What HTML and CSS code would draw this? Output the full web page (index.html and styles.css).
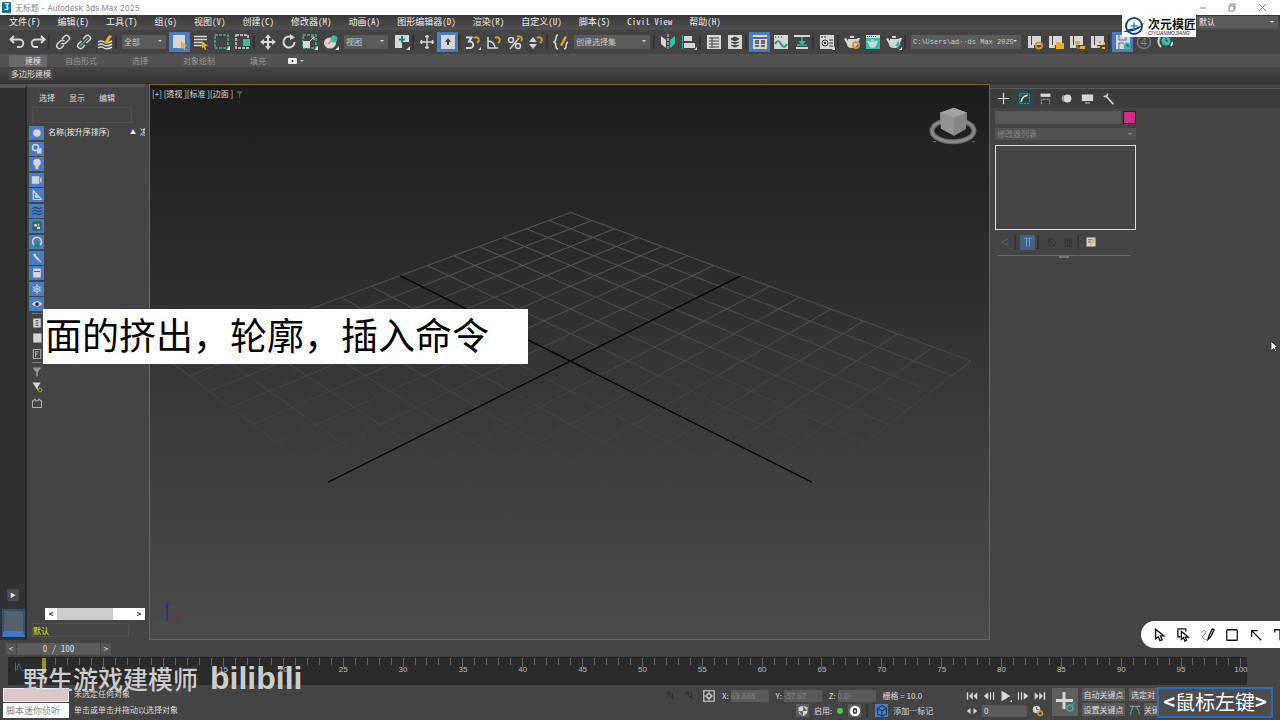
FILE: index.html
```
<!DOCTYPE html>
<html lang="zh-CN">
<head>
<meta charset="UTF-8" />
<meta name="viewport" content="width=device-width, initial-scale=1" />
<title>无标题 - Autodesk 3ds Max 2025</title>
<link rel="stylesheet" href="styles.css">
</head>
<body>
  <!-- Icon sprite -->
  <svg class="sprite" aria-hidden="true">
    <symbol id="undo" viewBox="0 0 16 16"><path d="M5 2L1.500 5.500 5 9M2 5.500h8.500a3.800 3.800 0 0 1 0 7.600H8" class="ln w2"/></symbol>
    <symbol id="redo" viewBox="0 0 16 16"><path d="M11 2l3.500 3.500L11 9M14 5.500H5.500a3.800 3.800 0 0 0 0 7.600H8" class="ln w2"/></symbol>
    <symbol id="link" viewBox="0 0 16 16"><path d="M7 5l2.500-2.800a2.800 2.800 0 0 1 4 4L10.500 9a2.800 2.800 0 0 1-4 0M9 11l-2.500 2.800a2.800 2.800 0 0 1-4-4L5.500 7a2.800 2.800 0 0 1 4 0" class="ln w15"/></symbol>
    <symbol id="unlink" viewBox="0 0 16 16"><path d="M7 5l2.500-2.800a2.800 2.800 0 0 1 4 4L10.500 9M9 11l-2.500 2.800a2.800 2.800 0 0 1-4-4L5.500 7" class="ln w15"/><path d="M4 12l8-8" class="ln teal w15"/></symbol>
    <symbol id="bind" viewBox="0 0 16 16"><path d="M1 8q3-2 6 0t8-1M1 11q3-2 6 0t8-1M1 14q3-2 6 0t8-1" class="ln w15"/><path d="M7 9l5-8 3 1-5 8z" class="gold"/></symbol>
    <symbol id="pick" viewBox="0 0 16 16"><path d="M1 1h12v13H1z" class="fl"/><path d="M9 7l6 5-3 .4 1.500 3-1.500.600-1.500-3L9 15z" class="gold"/></symbol>
    <symbol id="byname" viewBox="0 0 16 16"><path d="M1 2.500h13M1 5.500h13M1 8.500h8M1 11.500h8" class="ln w15"/><path d="M9 7l6 5-3 .4 1.500 3-1.500.600-1.500-3L9 15z" class="gold"/></symbol>
    <symbol id="region" viewBox="0 0 16 16"><path d="M1 1h13v13H1z" class="ln teal w15 dash"/><path d="M16 12v4h-4z" class="fl"/></symbol>
    <symbol id="window" viewBox="0 0 16 16"><path d="M1 1h12v13H1z" class="ln w15 dash"/><path d="M8 5h7v7H8z" class="tfl"/></symbol>
    <symbol id="move" viewBox="0 0 16 16"><path d="M8 2v12M2 8h12" class="ln w2"/><path d="M8 0l3 4H5zM8 16l3-4H5zM0 8l4-3v6zM16 8l-4-3v6z" class="fl"/></symbol>
    <symbol id="rotate" viewBox="0 0 16 16"><path d="M13.500 8a5.500 5.500 0 1 1-3-4.900" class="ln w2"/><path d="M9 0l5 3.500L9 6z" class="fl"/></symbol>
    <symbol id="scale" viewBox="0 0 16 16"><path d="M1 1h13v13H1z" class="ln teal w15 dash"/><path d="M1 7h7v7H1z" class="fl"/><path d="M8 7l4-4M9 3h3v3" class="ln"/><path d="M16 12v4h-4z" class="fl"/></symbol>
    <symbol id="place" viewBox="0 0 16 16"><ellipse cx="7" cy="9" rx="6" ry="5.500" class="fl"/><circle cx="11" cy="5" r="3.500" class="tfl"/><path d="M5 10l5-5" class="ln gstroke w15"/><path d="M16 12v4h-4z" class="fl"/></symbol>
    <symbol id="pivot" viewBox="0 0 16 16"><path d="M1 1h7v13H1zM8 1h7v7H8z" class="fl"/><path d="M8 2v7M5 5.500h6" stroke="#1f8474" stroke-width="2"/><path d="M16 12v4h-4z" class="fl"/></symbol>
    <symbol id="cross" viewBox="0 0 16 16"><path d="M8 1v14M1 8h14M6 2.500h4M6 13.500h4M2.500 6v4M13.500 6v4" class="ln w15"/></symbol>
    <symbol id="keyup" viewBox="0 0 16 16"><path d="M1 1h14v14H1z" class="fl"/><path d="M8 4l3 4H9v3H7V8H5z" fill="#444"/></symbol>
    <symbol id="snap" viewBox="0 0 16 16"><path d="M1 3.500h5.500L4 7.500h1a3 3 0 0 1 0 6.500H1" class="ln w2"/><path d="M9 4a2.800 2.800 0 1 1 4 4l-1 1" class="ln gstroke w2"/><path d="M16 13v3h-3z" class="fl"/></symbol>
    <symbol id="angle" viewBox="0 0 16 16"><path d="M2 3v11h10M2 7a7 7 0 0 1 7 7" class="ln w15"/><path d="M9 4a2.800 2.800 0 1 1 4 4l-1 1" class="ln gstroke w2"/></symbol>
    <symbol id="percent" viewBox="0 0 16 16"><circle cx="4" cy="6" r="2.500" class="ln w15"/><circle cx="11" cy="12" r="2.500" class="ln w15"/><path d="M3 15l9-11" class="ln w15"/><path d="M10 3a2.500 2.500 0 1 1 4 4" class="ln gstroke w2"/></symbol>
    <symbol id="spin" viewBox="0 0 16 16"><path d="M5 3l4 5H1zM5 15l4-5H1z" class="fl"/><path d="M9 4a2.800 2.800 0 1 1 4 4l-1 1" class="ln gstroke w2"/></symbol>
    <symbol id="sets" viewBox="0 0 16 16"><path d="M5 1Q3 1 3 4t-2 4q2 1 2 4t2 3M11 15q2 0 2-3t2-4" class="ln w15"/><path d="M7 11l5-9 2 1-5 9z" class="gold"/></symbol>
    <symbol id="mirror" viewBox="0 0 16 16"><path d="M1 2l5 4v8l-5-4z" class="fl"/><path d="M15 2l-5 4v8l5-4z" class="tfl"/><path d="M8 0v16" class="ln dash"/></symbol>
    <symbol id="align" viewBox="0 0 16 16"><path d="M1.500 1v14" class="ln teal"/><path d="M3 2h8v5H3zM3 9h11v5H3z" class="fl"/><path d="M16 13v3h-3z" class="fl"/></symbol>
    <symbol id="layers" viewBox="0 0 16 16"><path d="M1 1h14v14H1z" class="fl"/><path d="M3 4h10M3 7h10M3 10h10M3 13h10M6 3v11" stroke="#444" fill="none"/></symbol>
    <symbol id="stack" viewBox="0 0 16 16"><path d="M1 1h14v14H1z" class="fl"/><path d="M8 3l4 2-4 2-4-2zM4 8l4 2 4-2M4 11l4 2 4-2" stroke="#444" fill="#444"/></symbol>
    <symbol id="ribbon" viewBox="0 0 16 16"><path d="M1 1h14v14H1z" class="fl"/><path d="M1 4h14M3 7h4M9 7h4M3 9h4M9 9h4M3 12h4M9 12h4" stroke="#444" fill="none" stroke-width="1.500"/></symbol>
    <symbol id="curve" viewBox="0 0 16 16"><path d="M1 1h14v14H1z" class="fl"/><path d="M2 3h1M5 3h1M8 3h1" stroke="#333"/><path d="M2 10q3-6 6 0t6 0" stroke="#259987" fill="none" stroke-width="2"/></symbol>
    <symbol id="schematic" viewBox="0 0 16 16"><path d="M0 1h16v2H0zM2 13h12v2H2z" class="fl"/><path d="M8 3v5M3 11h10" class="ln teal w15"/><path d="M4 7h8l-4 4z" class="tfl"/></symbol>
    <symbol id="material" viewBox="0 0 16 16"><path d="M1 1h14v14H1z" class="fl"/><path d="M2 3h2M5 3h2M10 6h4M10 9h4M10 12h4" stroke="#333"/><circle cx="6" cy="9" r="3" fill="none" stroke="#333"/><circle cx="6" cy="9" r="1"/><path d="M16 13v3h-3z" fill="#fff"/></symbol>
    <symbol id="teapot" viewBox="0 0 16 16"><path d="M4 5h8l2-1h2l-2 5q-1 5-6 5t-5-4L0 5l2-1 2 3zM6 2h4v2H6z" class="fl"/></symbol>
    <symbol id="teaset" viewBox="0 0 16 16"><use href="#teapot"/><circle cx="12" cy="11" r="3" class="ln gstroke w2"/></symbol>
    <symbol id="teaframe" viewBox="0 0 16 16"><path d="M1 1h14v14H1z" class="tfl"/><path d="M1 1h14v3H1z" class="fl"/><path d="M2 2.500h9" stroke="#333" stroke-dasharray="1 1"/><use href="#teapot" x="2" y="4" width="11" height="11"/></symbol>
    <symbol id="teago" viewBox="0 0 16 16"><use href="#teapot"/><path d="M9 12l4-6v4h2l-4 5v-3z" class="tfl"/><path d="M16 13v3h-3z" fill="#fff"/></symbol>
    <symbol id="proj" viewBox="0 0 16 16"><path d="M1 2h3v10H1zM5 2h9v9H5zM1 11h6v3H1z" class="fl"/></symbol>
    <symbol id="projgear" viewBox="0 0 16 16"><use href="#proj"/><circle cx="12" cy="11.500" r="3" class="ln gstroke w2"/></symbol>
    <symbol id="projdir" viewBox="0 0 16 16"><use href="#proj"/><path d="M8 8h3l1 1h4v6H8z" class="gold"/></symbol>
    <symbol id="projtree" viewBox="0 0 16 16"><use href="#proj"/><path d="M6 7h5v3H6zM11 12h5v3h-5z" class="gold"/><path d="M8 10v4h3" class="ln gstroke"/></symbol>
    <symbol id="projdots" viewBox="0 0 16 16"><use href="#proj"/><path d="M9 7h2v3H9zM13 8h2v3h-2zM7 12h3v2H7zM12 13h3v2h-3z" class="gold"/></symbol>
    <symbol id="save" viewBox="0 0 16 16"><path d="M1 1h12l2 2v12H1z" class="fl"/><path d="M4 1v5h7V1M4 15V9h5" stroke="#4c78b8" fill="none"/><circle cx="12" cy="12" r="3.500" class="tfl"/><path d="M12 10v2h2" stroke="#333" fill="none"/></symbol>
    <symbol id="four" viewBox="0 0 16 16"><circle cx="8" cy="8" r="6.500" stroke="#777" stroke-width="1.500" fill="none"/><path d="M9 12V4L5 9.500h6" stroke="#888" fill="none"/></symbol>
    <symbol id="clock" viewBox="0 0 16 16"><circle cx="9" cy="7" r="4.500" class="tfl"/><path d="M9 4v3h2" stroke="#333" fill="none"/><path d="M3 3a7 7 0 0 0 1 10M14 12l2-4" class="ln w2"/></symbol>

    <symbol id="sphere" viewBox="0 0 16 16"><circle cx="8" cy="8" r="5" class="fl"/></symbol>
    <symbol id="shapes" viewBox="0 0 16 16"><circle cx="6" cy="6" r="4" class="ln w2"/><path d="M8 7h6v7H8z" class="fl"/></symbol>
    <symbol id="bulb" viewBox="0 0 16 16"><circle cx="8" cy="6" r="5" class="fl"/><path d="M6 9h4v6H6z" class="fl"/></symbol>
    <symbol id="camera" viewBox="0 0 16 16"><path d="M1 3h10v10H1zM12 6l2-2v8l-2-2z" class="fl"/></symbol>
    <symbol id="tri" viewBox="0 0 16 16"><path d="M3 2v12h11zM6 8.500v2.500h3z" class="ln w15"/></symbol>
    <symbol id="waves" viewBox="0 0 16 16"><path d="M2 5q3-3 6-1t6-1M2 9q3-3 6-1t6-1M2 13q3-3 6-1t6-1" stroke="#294468" fill="none" stroke-width="1.500"/></symbol>
    <symbol id="group" viewBox="0 0 16 16"><path d="M2 2h12v12H2z" fill="#335c58"/><circle cx="6" cy="7" r="2" class="fl"/><path d="M8 9h4v3H8zM9 4l3 3-3 1z" class="fl"/></symbol>
    <symbol id="xref" viewBox="0 0 16 16"><path d="M4 12a6 6 0 1 1 8 0" class="ln w2"/><path d="M4 15l4-9 4 9z" fill="#28877a"/></symbol>
    <symbol id="bone" viewBox="0 0 16 16"><circle cx="5" cy="4" r="2" class="fl"/><path d="M5 4l8 9-7-6z" class="ln w15"/></symbol>
    <symbol id="box" viewBox="0 0 16 16"><path d="M3 2h10v12H3z" class="fl"/><path d="M4 6h8" stroke="#333"/></symbol>
    <symbol id="snow" viewBox="0 0 16 16"><path d="M8 1v14M2 5l12 6M14 5L2 11" class="ln"/><circle cx="8" cy="8" r="4" class="ln"/></symbol>
    <symbol id="eye" viewBox="0 0 16 16"><path d="M1 8q7-8 14 0-7 7-14 0z" class="fl"/><circle cx="8" cy="8" r="2.500" fill="#222"/></symbol>
    <symbol id="doc" viewBox="0 0 16 16"><path d="M3 2h10v12H3z" class="fl"/><path d="M6 5h4M6 8h4M6 11h4" stroke="#444" stroke-width="1.500"/></symbol>
    <symbol id="blank" viewBox="0 0 16 16"><path d="M3 2h11v12H3z" class="fl"/></symbol>
    <symbol id="frame" viewBox="0 0 16 16"><path d="M3 2h10v12H3zM6 12V5h4M6 8h3" class="ln"/></symbol>
    <symbol id="funnel" viewBox="0 0 16 16"><path d="M2 2h12l-5 6v6H7V8z" fill="#999"/></symbol>
    <symbol id="funnelset" viewBox="0 0 16 16"><path d="M2 2h11L9 8v5L6 8z" class="fl"/><circle cx="12" cy="12" r="2.500" class="ln ystroke"/></symbol>
    <symbol id="bag" viewBox="0 0 16 16"><path d="M2 5h2V3h2v2h4V3h2v2h2v9H2z" class="ln"/></symbol>

    <symbol id="plus" viewBox="0 0 16 16"><path d="M8 1v14M1 8h14" class="ln w15"/></symbol>
    <symbol id="modify" viewBox="0 0 16 16"><path d="M2 2h12v12H2z" class="ln teal dash"/><path d="M4 12q1-7 8-8" class="ln w2"/></symbol>
    <symbol id="hier" viewBox="0 0 16 16"><path d="M2 2h12v4H2z" class="fl"/><path d="M3 15V9h10v6" class="ln teal w15 dash"/></symbol>
    <symbol id="motion" viewBox="0 0 16 16"><circle cx="9" cy="8" r="5" class="fl"/><path d="M4 4q-3 4 0 8" class="ln"/></symbol>
    <symbol id="screen" viewBox="0 0 16 16"><path d="M1 3h14v8H1zM5 13h6v1H5z" class="fl"/></symbol>
    <symbol id="wrench" viewBox="0 0 16 16"><path d="M2 5q4 2 5-3M5 5l9 10" class="ln w2"/></symbol>
    <symbol id="pin" viewBox="0 0 16 16"><path d="M3 8l9-4M3 8l9 4" stroke="#666" fill="none"/></symbol>
    <symbol id="tube" viewBox="0 0 16 16"><path d="M3 3h10M6 3v11M10 3v11" stroke="#6d9dd0" fill="none" stroke-width="1.500"/></symbol>
    <symbol id="unique" viewBox="0 0 16 16"><circle cx="9" cy="9" r="5" stroke="#2d2d2d" fill="none"/><path d="M4 4l8 9" stroke="#2d2d2d"/></symbol>
    <symbol id="trash" viewBox="0 0 16 16"><path d="M3 4h10M4 6h8v8H4zM7 6v8M10 6v8" stroke="#2d2d2d" fill="none"/></symbol>
    <symbol id="edit" viewBox="0 0 16 16"><path d="M2 2h12v12H2z" class="fl"/><path d="M4 5h6M4 8h4" stroke="#444"/><path d="M6 12l7-9 1 2-7 8z" fill="#c8bd23"/></symbol>

    <symbol id="first" viewBox="0 0 16 16"><path d="M2 3v10" class="ln w2"/><path d="M9 3v10L4 8zM15 3v10l-5-5z" class="fl"/></symbol>
    <symbol id="prev" viewBox="0 0 16 16"><path d="M7 3v10L1 8z" class="fl"/><path d="M10 3v10M14 3v10" class="ln w15"/></symbol>
    <symbol id="play" viewBox="0 0 16 16"><path d="M2 1l12 7-12 7zM16 13v3h-3z" class="fl"/></symbol>
    <symbol id="next" viewBox="0 0 16 16"><path d="M9 3v10l6-5z" class="fl"/><path d="M2 3v10M6 3v10" class="ln w15"/></symbol>
    <symbol id="last" viewBox="0 0 16 16"><path d="M14 3v10" class="ln w2"/><path d="M7 3v10l5-5zM1 3v10l5-5z" class="fl"/></symbol>
    <symbol id="keys" viewBox="0 0 16 16"><path d="M6 4v8L1 8zM10 4v8l5-4z" class="fl"/></symbol>
    <symbol id="timecfg" viewBox="0 0 16 16"><circle cx="6" cy="6" r="5" class="fl"/><path d="M6 3v3h3" stroke="#333" fill="none"/><circle cx="11" cy="11" r="3" class="ln gstroke w2"/></symbol>
    <symbol id="bigplus" viewBox="0 0 24 24"><path d="M11 2v17M3 10.500h17" class="ln w3"/><circle cx="17" cy="18" r="3" class="ln teal w15"/><path d="M17 18l5-6" class="ln teal"/></symbol>
    <symbol id="tangent" viewBox="0 0 16 16"><path d="M2 14Q4 2 8 3t6 11" class="ln teal w15"/><path d="M1 3h5M10 3h5" class="ln"/></symbol>
    <symbol id="abs" viewBox="0 0 16 16"><path d="M1 1h14v14H1z" class="ln w15"/><circle cx="8" cy="8" r="3" class="ln w15"/><path d="M8 2v4M8 10v4M2 8h4M10 8h4" class="ln w15"/></symbol>
    <symbol id="shield" viewBox="0 0 16 16"><path d="M8 1l6 2v5q0 4-6 7-6-3-6-7V3z" class="fl"/><path d="M8 1v7h6M8 15V8H2" fill="#666"/></symbol>
    <symbol id="zero" viewBox="0 0 16 16"><circle cx="8" cy="8" r="7" fill="#fff"/><ellipse cx="8" cy="8" rx="2" ry="3" fill="none" stroke="#333" stroke-width="2"/></symbol>
    <symbol id="cube" viewBox="0 0 16 16"><path d="M8 1l6 3v8l-6 3-6-3V4zM2 4l6 4 6-4M8 8v7" fill="none" stroke="#1d3c60" stroke-width="1.500"/></symbol>
    <symbol id="dim" viewBox="0 0 16 16"><path d="M3 3h3v3H3zM8 8l4 4M10 4v5" stroke="#2e2e2e" fill="none" stroke-width="1.500"/></symbol>

    <symbol id="arrow" viewBox="0 0 16 16"><path d="M3 1.500v11l3-2.500 2 4.500 2.500-1-2-4.500h4z" class="ink"/></symbol>
    <symbol id="arrowbox" viewBox="0 0 16 16"><path d="M4 10H1V1h9v3" class="ink"/><path d="M5 4v9l2.500-2 1.500 4 2-1-1.500-3.500H13z" class="ink"/></symbol>
    <symbol id="pen" viewBox="0 0 16 16"><path d="M8 13l1-4 4-8 2 1-4 8z" class="ink"/><path d="M1 5q3-4 4-1T2 9q-1 5 6 4" fill="none" stroke="#777"/></symbol>
    <symbol id="square" viewBox="0 0 16 16"><rect x="2" y="2" width="12" height="12" rx="1" class="ink"/></symbol>
    <symbol id="nw" viewBox="0 0 16 16"><path d="M14 14L3 3M3 10V3h7" class="ink"/></symbol>
    <symbol id="tee" viewBox="0 0 16 16"><path d="M2 5V2h12v3M8 2v12" class="ink"/></symbol>
  </svg>

  <header class="titlebar">
    <svg class="app-icon" viewBox="0 0 10 12"><path d="M0 0h10v12H0z" fill="#146f8c"/><path d="M3 2h4L5 5q3 1 1 3H3" fill="none" stroke="#d9f2f5" stroke-width="1.500"/></svg>
    <span class="title">无标题 - Autodesk 3ds Max 2025</span>
    <svg class="win-buttons" viewBox="0 0 70 12"><path d="M0 6h6M29 4h5v5h-5zM30 4V2h5v5h-1M59 2l7 7M66 2l-7 7" fill="none" stroke="#888"/></svg>
  </header>

  <nav class="menubar">
    <a href="#">文件(F)</a><a href="#">编辑(E)</a><a href="#">工具(T)</a><a href="#">组(G)</a><a href="#">视图(V)</a><a href="#">创建(C)</a><a href="#">修改器(M)</a><a href="#">动画(A)</a><a href="#">图形编辑器(D)</a><a href="#">渲染(R)</a><a href="#">自定义(U)</a><a href="#">脚本(S)</a><a href="#">Civil View</a><a href="#">帮助(H)</a>
    <span class="combo workspace"><select aria-label="工作区"><option>默认</option></select></span>
    <div class="studio-logo">
      <svg viewBox="0 0 24 20"><circle cx="11" cy="10" r="8" fill="none" stroke="#164583" stroke-width="2"/><path d="M0 16Q18 17 23 3 20 12 6 13z" fill="#164583"/><path d="M11 4l1 5 5 1-5 1-1 4-1-4-4-1 4-1z" fill="#3b8fd0"/></svg>
      <div><b>次元模匠</b><i>CIYUANMOJIANG</i></div>
    </div>
  </nav>

  <div class="toolbar" role="toolbar" aria-label="主工具栏">
    <button aria-label="撤消"><svg><use href="#undo"/></svg></button>
    <button aria-label="重做"><svg><use href="#redo"/></svg></button>
    <i class="sep"></i>
    <button aria-label="链接"><svg><use href="#link"/></svg></button>
    <button aria-label="取消链接"><svg><use href="#unlink"/></svg></button>
    <button aria-label="绑定到空间扭曲"><svg><use href="#bind"/></svg></button>
    <i class="sep"></i>
    <span class="combo filter"><select aria-label="选择过滤器"><option>全部</option></select></span>
    <button class="on" aria-label="选择对象"><svg><use href="#pick"/></svg></button>
    <button aria-label="按名称选择"><svg><use href="#byname"/></svg></button>
    <button aria-label="矩形选择区域"><svg><use href="#region"/></svg></button>
    <button aria-label="窗口/交叉"><svg><use href="#window"/></svg></button>
    <i class="sep"></i>
    <button aria-label="移动"><svg><use href="#move"/></svg></button>
    <button aria-label="旋转"><svg><use href="#rotate"/></svg></button>
    <button aria-label="缩放"><svg><use href="#scale"/></svg></button>
    <button aria-label="放置"><svg><use href="#place"/></svg></button>
    <span class="combo filter"><select aria-label="参考坐标系"><option>视图</option></select></span>
    <button aria-label="使用轴点中心"><svg><use href="#pivot"/></svg></button>
    <i class="sep"></i>
    <button aria-label="选择并操纵"><svg><use href="#cross"/></svg></button>
    <button class="on" aria-label="键盘快捷键覆盖"><svg><use href="#keyup"/></svg></button>
    <i class="sep"></i>
    <button aria-label="捕捉开关"><svg><use href="#snap"/></svg></button>
    <button aria-label="角度捕捉"><svg><use href="#angle"/></svg></button>
    <button aria-label="百分比捕捉"><svg><use href="#percent"/></svg></button>
    <button aria-label="微调器捕捉"><svg><use href="#spin"/></svg></button>
    <i class="sep"></i>
    <button aria-label="命名选择集"><svg><use href="#sets"/></svg></button>
    <span class="combo sets"><select aria-label="选择集"><option>创建选择集</option></select></span>
    <i class="sep"></i>
    <button aria-label="镜像"><svg><use href="#mirror"/></svg></button>
    <button aria-label="对齐"><svg><use href="#align"/></svg></button>
    <i class="sep"></i>
    <button aria-label="场景资源管理器"><svg><use href="#layers"/></svg></button>
    <button aria-label="层资源管理器"><svg><use href="#stack"/></svg></button>
    <i class="sep"></i>
    <button class="on" aria-label="功能区"><svg><use href="#ribbon"/></svg></button>
    <button aria-label="曲线编辑器"><svg><use href="#curve"/></svg></button>
    <button aria-label="图解视图"><svg><use href="#schematic"/></svg></button>
    <i class="sep"></i>
    <button aria-label="材质编辑器"><svg><use href="#material"/></svg></button>
    <i class="sep"></i>
    <button aria-label="渲染设置"><svg><use href="#teaset"/></svg></button>
    <button aria-label="渲染帧窗口"><svg><use href="#teaframe"/></svg></button>
    <button aria-label="渲染产品"><svg><use href="#teago"/></svg></button>
    <i class="sep"></i>
    <span class="combo path"><select aria-label="项目文件夹"><option>C:\Users\ad··ds Max 2025</option></select></span>
    <button aria-label="项目设置"><svg><use href="#projgear"/></svg></button>
    <button aria-label="打开项目"><svg><use href="#projdir"/></svg></button>
    <button aria-label="项目结构"><svg><use href="#projtree"/></svg></button>
    <button aria-label="项目选项"><svg><use href="#projdots"/></svg></button>
    <i class="sep"></i>
    <button class="on" aria-label="自动备份"><svg><use href="#save"/></svg></button>
    <button aria-label="备份数"><svg><use href="#four"/></svg></button>
    <button aria-label="备份间隔"><svg><use href="#clock"/></svg></button>
  </div>

  <div class="ribbon-tabs">
    <button class="active">建模</button><button>自由形式</button><button>选择</button><button>对象绘制</button><button>填充</button>
    <svg class="ribbon-toggle" viewBox="0 0 18 8"><rect width="9" height="6" y="1" rx="1" fill="#eee"/><circle cx="4.500" cy="4" r="1" fill="#333"/><path d="M12 3h4l-2 2z" fill="#bbb"/></svg>
  </div>
  <div class="ribbon-panel"><span>多边形建模</span></div>

  <main class="workspace-area">
    <aside class="dock">
      <button class="expand" aria-label="展开">▶</button>
      <button class="layout-tab" aria-label="视口布局"></button>
    </aside>

    <section class="explorer" aria-label="场景资源管理器">
      <div class="explorer-menu"><a href="#">选择</a><a href="#">显示</a><a href="#">编辑</a></div>
      <input class="search" type="text" aria-label="查找">
      <div class="explorer-body">
        <div class="filters">
          <button class="on" aria-label="几何体"><svg><use href="#sphere"/></svg></button>
          <button class="on" aria-label="图形"><svg><use href="#shapes"/></svg></button>
          <button class="on" aria-label="灯光"><svg><use href="#bulb"/></svg></button>
          <button class="on" aria-label="摄影机"><svg><use href="#camera"/></svg></button>
          <button class="on" aria-label="辅助对象"><svg><use href="#tri"/></svg></button>
          <button class="on" aria-label="空间扭曲"><svg><use href="#waves"/></svg></button>
          <button class="on" aria-label="组"><svg><use href="#group"/></svg></button>
          <button class="on" aria-label="外部参照"><svg><use href="#xref"/></svg></button>
          <button class="on" aria-label="骨骼"><svg><use href="#bone"/></svg></button>
          <button class="on" aria-label="容器"><svg><use href="#box"/></svg></button>
          <button class="on" aria-label="冻结"><svg><use href="#snow"/></svg></button>
          <button class="on" aria-label="隐藏"><svg><use href="#eye"/></svg></button>
          <hr>
          <button aria-label="全部"><svg><use href="#doc"/></svg></button>
          <button aria-label="无"><svg><use href="#blank"/></svg></button>
          <button aria-label="反选"><svg><use href="#frame"/></svg></button>
          <hr>
          <button aria-label="过滤器"><svg><use href="#funnel"/></svg></button>
          <button aria-label="过滤器设置"><svg><use href="#funnelset"/></svg></button>
          <button aria-label="容器操作"><svg><use href="#bag"/></svg></button>
        </div>
        <div class="tree">
          <div class="tree-head"><span>名称(按升序排序)</span><span class="sort">▲</span><span class="frozen">冻结</span></div>
          <div class="scrollbar"><span>&lt;</span><i></i><span>&gt;</span></div>
        </div>
      </div>
      <input class="layer-name" type="text" value="默认" aria-label="层">
    </section>

    <section class="viewport" aria-label="透视视口">
      <div class="viewport-label">[+] [透视 ][标准 ][边面 ] <svg><use href="#funnel"/></svg></div>
      <svg class="scene" viewBox="150 85 838 554" preserveAspectRatio="xMidYMid slice">
        <g id="grid"></g>
        <path class="axis" d="M400 276L811 482M740 276L328 482"/>
        <ellipse cx="952" cy="131" rx="21" ry="11" fill="none" stroke="#6c6c6c" stroke-width="5"/>
        <ellipse cx="952" cy="131" rx="21" ry="11" fill="none" stroke="#8c8c8c" stroke-width="2"/>
        <path d="M939 113l14-5 13 5-1 16-12 7-13-7z" fill="#929292"/>
        <path d="M939 113l14 5 13-5-13-5z" fill="#a2a2a2"/>
        <path d="M953 118v18l12-7 1-16z" fill="#858585"/>
        <path d="M932 142h3M971 142h3" stroke="#777"/>
        <path d="M167 621v-15" stroke="#2222a0" stroke-width="1.500"/>
        <path d="M167 621l15-6" stroke="#8c2528"/>
        <path d="M167 621l-10-5" stroke="#21602a"/>
        <path d="M166 602h3l-3 3h3" stroke="#2d2d9c" fill="none"/>
      </svg>
    </section>

    <section class="command-panel" aria-label="命令面板">
      <div class="panel-tabs">
        <button aria-label="创建"><svg><use href="#plus"/></svg></button>
        <button class="active" aria-label="修改"><svg><use href="#modify"/></svg></button>
        <button aria-label="层次"><svg><use href="#hier"/></svg></button>
        <button aria-label="运动"><svg><use href="#motion"/></svg></button>
        <button aria-label="显示"><svg><use href="#screen"/></svg></button>
        <button aria-label="实用程序"><svg><use href="#wrench"/></svg></button>
      </div>
      <div class="panel-content">
        <div class="name-row"><input type="text" aria-label="对象名称"><button class="swatch" aria-label="对象颜色"></button></div>
        <span class="combo modifiers"><select aria-label="修改器列表" disabled><option>修改器列表</option></select></span>
        <div class="modifier-stack"></div>
        <div class="stack-tools">
          <button aria-label="锁定堆栈"><svg><use href="#pin"/></svg></button><i class="sep"></i>
          <button class="on" aria-label="显示最终结果"><svg><use href="#tube"/></svg></button><i class="sep"></i>
          <button aria-label="使唯一"><svg><use href="#unique"/></svg></button>
          <button aria-label="移除修改器"><svg><use href="#trash"/></svg></button><i class="sep"></i>
          <button aria-label="配置修改器集"><svg><use href="#edit"/></svg></button>
        </div>
        <div class="rollup"></div>
      </div>
    </section>
  </main>

  <div class="time-slider">
    <button aria-label="上一帧">&lt;</button><button class="thumb">0 / 100</button><button aria-label="下一帧">&gt;</button>
  </div>
  <div class="track-bar">
    <svg class="mini-curve" viewBox="0 0 16 16"><path d="M2 2v12M4 12q2-14 4-5t6 5" fill="none" stroke="#379080"/></svg>
    <div class="ticks" id="ticks"></div>
  </div>

  <footer class="status">
    <div class="listener"><div class="pink"></div><input type="text" value="脚本迷你侦听" aria-label="脚本迷你侦听器"></div>
    <div class="messages"><p>未选定任何对象</p><p>单击或单击并拖动以选择对象</p></div>
    <div class="coords">
      <div class="row">
        <svg><use href="#dim"/></svg><svg><use href="#dim"/></svg><svg><use href="#abs"/></svg>
        <label>X: <input type="text" value="69.888" disabled></label>
        <label>Y: <input type="text" value="-57.67" disabled></label>
        <label>Z: <input type="text" value="0.0" disabled></label>
        <span>栅格 = 10.0</span>
      </div>
      <div class="row second">
        <button aria-label="安全"><svg><use href="#shield"/></svg></button>
        <span>启用:</span><i class="led"></i>
        <button aria-label="脚本计数"><svg><use href="#zero"/></svg></button><i class="sep"></i>
        <button class="on" aria-label="时间标记"><svg><use href="#cube"/></svg></button>
        <span>添加…标记</span>
      </div>
    </div>
    <div class="playback">
      <div class="row">
        <button aria-label="转至开头"><svg><use href="#first"/></svg></button>
        <button aria-label="上一帧"><svg><use href="#prev"/></svg></button>
        <button aria-label="播放"><svg><use href="#play"/></svg></button>
        <button aria-label="下一帧"><svg><use href="#next"/></svg></button>
        <button aria-label="转至结尾"><svg><use href="#last"/></svg></button>
      </div>
      <div class="row">
        <button aria-label="关键点模式"><svg><use href="#keys"/></svg></button>
        <input class="frame-field" type="text" value="0" aria-label="当前帧">
        <button aria-label="时间配置"><svg><use href="#timecfg"/></svg></button>
      </div>
    </div>
    <button class="set-key" aria-label="设置关键点"><svg><use href="#bigplus"/></svg></button>
    <div class="key-buttons"><button>自动关键点</button><button>设置关键点</button></div>
    <div class="key-buttons wide"><button>选定对</button><div class="row"><svg><use href="#tangent"/></svg><button>关键</button></div></div>
    <div class="key-hint"><b>&lt;</b>鼠标左键<b>&gt;</b></div>
  </footer>

  <!-- Overlays -->
  <div class="caption">面的挤出，轮廓，插入命令</div>
  <div class="watermark"><span>野生游戏建模师</span><b>bilibili</b></div>
  <div class="draw-tools">
    <button aria-label="选择"><svg><use href="#arrow"/></svg></button>
    <button aria-label="框选"><svg><use href="#arrowbox"/></svg></button>
    <button aria-label="画笔"><svg><use href="#pen"/></svg></button>
    <button aria-label="矩形"><svg><use href="#square"/></svg></button>
    <button aria-label="箭头"><svg><use href="#nw"/></svg></button>
    <button aria-label="文字"><svg><use href="#tee"/></svg></button>
  </div>
  <svg class="cursor" viewBox="0 0 10 14"><path d="M1 1v11l3-3 2 4 1-1-1-4h3z" fill="#fff" stroke="#222"/></svg>

<script src="script.js"></script>
</body>
</html>
```
FILE: styles.css
```
* {
  box-sizing: border-box;
}
body {
  margin: 0;
  height: 100vh;
  display: flex;
  flex-direction: column;
  position: relative;
  overflow: hidden;
  background: #444;
  color: #ddd;
  font: 9px/12px "Noto Sans Mono CJK SC", "Noto Sans CJK SC", sans-serif;
}
a {
  color: inherit;
  text-decoration: none;
}
button, input, select {
  font: inherit;
  color: inherit;
  border: 0;
  padding: 0;
  margin: 0;
  background: none;
  border-radius: 0;
  min-width: 0;
}
button {
  display: flex;
  align-items: center;
  justify-content: center;
}
svg {
  width: 16px;
  height: 16px;
  flex: none;
}
.sprite {
  position: absolute;
  width: 0;
  height: 0;
}
/* Icon strokes and fills */
.ln {
  fill: none;
  stroke: #d6d6d6;
}
.w15 {
  stroke-width: 1.5px;
}
.w2 {
  stroke-width: 2px;
}
.w3 {
  stroke-width: 3px;
}
.dash {
  stroke-dasharray: 3 1;
}
.fl {
  fill: #d6d6d6;
}
.tfl {
  fill: #35bca9;
}
.gold {
  fill: #e8ad29;
}
.teal {
  stroke: #43ad9b;
}
.gstroke {
  stroke: #cf982d;
}
.ystroke {
  stroke: #d0c020;
}
.ink {
  fill: none;
  stroke: #111;
  stroke-width: 1.5px;
}
.sep {
  width: 4px;
  height: 14px;
  border-left: 2px solid #333;
  flex: none;
}
/* Title bar */
.titlebar {
  height: 15px;
  flex: none;
  display: flex;
  align-items: center;
  gap: 4px;
  padding: 0 10px 0 2px;
  background: #fff;
  color: #888;
}
.app-icon {
  width: 9px;
  height: 11px;
}
.title {
  font-family: Inter, "Noto Sans CJK SC", sans-serif;
  font-size: 8px;
}
.win-buttons {
  width: 70px;
  height: 12px;
  margin-left: auto;
}
/* Menu bar */
.menubar {
  height: 15px;
  flex: none;
  display: flex;
  align-items: center;
  gap: 17px;
  padding: 0 0 2px 9px;
  position: relative;
  background: linear-gradient(#383838, #505050);
  color: #eee;
  white-space: nowrap;
}
.combo {
  position: relative;
  flex: none;
  height: 12px;
  background: #5a5a5a;
  font-size: 8px;
}
.combo select {
  display: block;
  width: 100%;
  height: 100%;
  padding-left: 2px;
  appearance: none;
}
.combo::after {
  content: "";
  position: absolute;
  right: 4px;
  top: 5px;
  border: 2px solid transparent;
  border-top-color: #ddd;
}
.workspace {
  width: 81px;
  margin: 0 2px 0 auto;
}
.studio-logo {
  position: absolute;
  right: 84px;
  top: 0;
  z-index: 2;
  width: 74px;
  height: 22px;
  display: flex;
  align-items: center;
  gap: 1px;
  padding-left: 1px;
  background: #fff;
  color: #111;
}
.studio-logo svg {
  width: 24px;
  height: 20px;
}
.studio-logo b, .studio-logo i {
  display: block;
}
.studio-logo b {
  font: 700 12px/13px "Noto Sans CJK SC", sans-serif;
}
.studio-logo i {
  font: italic 5px/6px "Liberation Sans", sans-serif;
}
/* Main toolbar */
.toolbar {
  height: 24px;
  flex: none;
  display: flex;
  align-items: center;
  padding-left: 6px;
  background: #444;
}
.toolbar > button {
  width: 21px;
  height: 20px;
  flex: none;
}
.toolbar .combo {
  height: 14px;
  margin: 0 3px;
  color: #ccc;
}
.on {
  background: #4b7cbf;
}
.filter {
  width: 44px;
}
.sets {
  width: 76px;
}
.path {
  width: 110px;
}
.path select {
  font: 7px "Liberation Mono", monospace;
}
/* Ribbon */
.ribbon-tabs {
  height: 13px;
  flex: none;
  display: flex;
  align-items: center;
  gap: 35px;
  padding-left: 9px;
  background: #525252;
  color: #999;
  font-size: 8px;
}
.ribbon-tabs .active {
  width: 38px;
  height: 12px;
  padding-left: 10px;
  margin-right: -17px;
  background: #686868;
  color: #ddd;
}
.ribbon-toggle {
  width: 18px;
  height: 8px;
  margin-left: -13px;
}
.ribbon-panel {
  height: 16px;
  flex: none;
  padding: 1px 9px;
  background: linear-gradient(#464646, #353535);
  font-size: 8px;
}
.ribbon-panel span {
  display: inline-block;
  padding: 0 2px;
  background: #4b4b4b;
}
/* Work area */
.workspace-area {
  flex: 1;
  min-height: 0;
  display: flex;
  border-top: 1px solid #2f2f2f;
}
.dock {
  width: 27px;
  flex: none;
  display: flex;
  flex-direction: column;
  justify-content: flex-end;
  border-top: 4px solid #555;
  border-right: 2px solid #272727;
  background: #313133;
}
.expand {
  width: 12px;
  height: 12px;
  margin: 0 0 8px 7px;
  border-radius: 2px;
  background: #4b4b4b;
  font-size: 6px;
}
.layout-tab {
  height: 28px;
  margin: 0 0 3px 2px;
  border: 2px solid #30517d;
  border-bottom: 6px solid #3978ca;
  background: #53606d;
}
.explorer {
  width: 118px;
  flex: none;
  display: flex;
  flex-direction: column;
  padding: 5px 0 3px 2px;
  border-top: 3px solid #555;
  margin-right: 4px;
}
.explorer-menu {
  display: flex;
  gap: 13px;
  padding: 0 10px;
  font-family: "Noto Sans CJK SC", sans-serif;
  font-size: 8px;
}
.explorer-menu a {
  width: 17px;
}
.search {
  width: 100px;
  height: 16px;
  margin: 3px;
  border: 1px solid #505050;
}
.explorer-body {
  flex: 1;
  min-height: 0;
  display: flex;
}
.filters {
  width: 15px;
  height: 284px;
  display: flex;
  flex-direction: column;
  justify-content: space-between;
}
.filters button {
  width: 15px;
  height: 14px;
}
.filters svg {
  width: 12px;
  height: 12px;
}
.filters hr {
  width: 10px;
  margin: 0 3px;
  border: 0;
  border-top: 1px solid #777;
}
.tree {
  flex: 1;
  min-width: 0;
  display: flex;
  flex-direction: column;
  justify-content: space-between;
  padding-left: 1px;
}
.tree-head {
  display: flex;
  overflow: hidden;
  white-space: nowrap;
  padding-left: 3px;
  color: #eee;
  font-family: "Noto Sans CJK SC", sans-serif;
  font-size: 8px;
}
.sort {
  margin-left: auto;
  font-size: 6px;
}
.frozen {
  width: 5px;
  margin-left: 4px;
  overflow: hidden;
}
.scrollbar {
  height: 12px;
  display: flex;
  justify-content: space-between;
  background: #fff;
  color: #222;
}
.scrollbar span {
  width: 12px;
  text-align: center;
  font-weight: 700;
}
.scrollbar i {
  width: 56px;
  margin-right: 20px;
  background: #ccc;
}
.layer-name {
  width: 97px;
  height: 14px;
  margin: 3px 3px 0;
  border: 1px solid #525252;
  color: #e8e800;
  font-size: 8px;
}
/* Viewport */
.viewport {
  flex: 1;
  min-width: 0;
  position: relative;
  border: 1px solid #7c6b24;
  background: linear-gradient(#1c1c1c, #2b2b2b 30%, #3a3a3a 60%, #4b4b4b);
}
.scene {
  display: block;
  width: 100%;
  height: 100%;
}
.viewport-label {
  position: absolute;
  left: 2px;
  top: 3px;
  font: 8px/12px "Noto Sans CJK SC", sans-serif;
  white-space: nowrap;
}
.viewport-label svg {
  width: 9px;
  height: 9px;
  opacity: 0.5;
  vertical-align: middle;
}
.axis {
  fill: none;
  stroke: #050505;
  stroke-width: 1.5px;
}
#grid path {
  fill: none;
  stroke: #555;
}
/* Command panel */
.command-panel {
  width: 290px;
  flex: none;
  padding-top: 4px;
}
.panel-tabs {
  display: flex;
  gap: 3px;
  height: 20px;
  padding: 1px 4px;
  border-top: 1px solid #5a5a5a;
  background: #3c3c3c;
}
.panel-tabs button {
  width: 18px;
}
.panel-tabs .active {
  background: #29494a;
}
.panel-tabs svg {
  width: 13px;
  height: 13px;
}
.panel-content {
  width: 148px;
  padding: 3px 0 0 5px;
}
.name-row {
  display: flex;
  gap: 2px;
  margin-bottom: 4px;
}
.name-row input {
  width: 126px;
  height: 13px;
  background: #585858;
}
.swatch {
  width: 13px;
  height: 13px;
  border: 1px solid #222;
  background: #d02d83;
}
.modifiers {
  display: block;
  width: 141px;
  margin-bottom: 5px;
  background: #535353;
  color: #858585;
}
.modifiers select {
  opacity: 1;
}
.modifiers::after {
  border-top-color: #888;
}
.modifier-stack {
  width: 141px;
  height: 85px;
  border: 1px solid #ddd;
}
.stack-tools {
  display: flex;
  align-items: center;
  gap: 2px;
  height: 24px;
  padding-left: 2px;
}
.stack-tools button {
  width: 15px;
  height: 15px;
}
.stack-tools svg {
  width: 12px;
  height: 12px;
}
.stack-tools .on {
  background: #456080;
}
.rollup {
  width: 134px;
  height: 3px;
  margin: 1px 2px;
  border-top: 1px solid #686868;
  background: linear-gradient(#777, #777) center / 10px 3px no-repeat;
}
/* Time slider */
.time-slider {
  height: 17px;
  flex: none;
  display: flex;
  gap: 1px;
  padding: 3px 6px 2px;
}
.time-slider button {
  width: 10px;
  background: #555;
}
.time-slider .thumb {
  width: 83px;
  background: #5b5b5b;
}
.track-bar {
  height: 28px;
  flex: none;
  display: flex;
  margin: 0 33px 0 8px;
  border-top: 1px solid #222;
  background: #2b2b2b;
}
.mini-curve {
  width: 12px;
  height: 12px;
  margin: 3px 12px 0 6px;
}
.ticks {
  flex: 1;
  display: flex;
}
.ticks span {
  flex: 1 1 0;
  min-width: 0;
  height: 7px;
  display: flex;
  justify-content: center;
  background: linear-gradient(#666, #666) center / 1px 100% no-repeat;
}
.ticks b {
  flex: none;
  margin-top: 6px;
  font: 8px/12px "Liberation Sans", sans-serif;
  color: #bbb;
}
.ticks .major {
  height: 9px;
}
.ticks .now {
  height: 15px;
  background: linear-gradient(#8b952a, #8b952a) center / 4px 100% no-repeat;
}
/* Status bar */
.status {
  height: 35px;
  flex: none;
  display: flex;
  padding: 3px 0 2px 3px;
  position: relative;
  white-space: nowrap;
  font-family: "Noto Sans CJK SC", sans-serif;
  font-size: 8px;
}
.status svg {
  width: 12px;
  height: 12px;
}
.row {
  display: flex;
  align-items: center;
  height: 15px;
}
.listener {
  width: 66px;
  color: #888;
  font-size: 9px;
}
.pink {
  height: 14px;
  background: #dcc6c7;
  border: 1px solid #eee;
}
.listener input {
  display: block;
  width: 100%;
  height: 15px;
  margin-top: 1px;
  padding-left: 3px;
  background: #fff;
}
.messages {
  flex: 1;
  padding-left: 5px;
}
.messages p {
  margin: 0 0 4px;
}
.coords {
  width: 300px;
}
.coords .row {
  gap: 7px;
}
.coords .second {
  gap: 5px;
  padding-left: 131px;
}
.coords input {
  width: 38px;
  height: 12px;
  background: #5a5a5a;
  color: #858585;
}
.coords button {
  width: 13px;
  height: 13px;
  background: #5b5b5b;
}
.coords .on {
  background: #4b7cbf;
}
.led {
  width: 6px;
  height: 6px;
  border-radius: 50%;
  background: #46d646;
}
.playback {
  width: 87px;
}
.playback .row {
  gap: 4px;
}
.playback button {
  width: 13px;
}
.frame-field {
  width: 45px;
  height: 12px;
  padding-left: 2px;
  background: #5b5b5b;
}
.set-key {
  width: 26px;
  height: 28px;
  margin-right: 4px;
  background: #606060;
}
.status .set-key svg {
  width: 24px;
  height: 24px;
}
.key-buttons {
  width: 47px;
  display: flex;
  flex-direction: column;
  gap: 2px;
}
.key-buttons button {
  width: 43px;
  height: 13px;
  background: #5b5b5b;
}
.wide {
  width: 151px;
}
.wide button {
  width: 28px;
}
.wide .row {
  gap: 3px;
  height: 13px;
}
.wide .row button {
  width: 16px;
}
.key-hint {
  position: absolute;
  right: 7px;
  bottom: 2px;
  width: 116px;
  height: 31px;
  border: 2px solid #286fbf;
  background: #4b4d50;
  color: #fff;
  font: 20px/26px "Noto Sans CJK SC", sans-serif;
  text-align: center;
}
/* Overlays */
.caption {
  position: absolute;
  left: 43px;
  top: 309px;
  width: 485px;
  height: 55px;
  padding-left: 2px;
  background: #fff;
  color: #000;
  font: 37px/50px "Noto Sans CJK SC", sans-serif;
  white-space: nowrap;
}
.watermark {
  position: absolute;
  left: 23px;
  bottom: 22px;
  display: flex;
  align-items: center;
  gap: 12px;
  color: #ccc;
  font: 500 25px/40px "Noto Sans CJK SC", sans-serif;
}
.watermark b {
  font: 700 32px/40px "Liberation Sans", sans-serif;
}
.draw-tools {
  position: absolute;
  right: 0;
  bottom: 72px;
  width: 139px;
  height: 27px;
  display: flex;
  align-items: center;
  gap: 10px;
  padding-left: 12px;
  border-radius: 14px 0 0 14px;
  background: #fff;
  overflow: hidden;
}
.draw-tools button {
  width: 14px;
  flex: none;
}
.draw-tools svg {
  width: 14px;
  height: 14px;
}
.cursor {
  position: absolute;
  right: 1px;
  top: 340px;
  width: 9px;
  height: 13px;
}
```
FILE: script.js
```
(function () {
  // Home grid, drawn in perspective and fading towards the viewer
  const grid = document.getElementById('grid');
  const cells = 14;

  function project(u, v) {
    const s = u + v;
    const w = 1 + 0.174 * s;
    return [570 + 200 * (u - v) / w, 361 - 100 * s / w];
  }

  function segment(a, b) {
    const fade = Math.max(0, Math.min(1, (510 - (a[1] + b[1]) / 2) / 260));
    if (!fade) return;
    const path = document.createElementNS('http://www.w3.org/2000/svg', 'path');
    path.setAttribute('d', `M${a[0]} ${a[1]}L${b[0]} ${b[1]}`);
    path.setAttribute('opacity', fade);
    grid.appendChild(path);
  }

  for (let i = 0; i <= cells; i++) {
    // the two centre lines are the black axes
    if (i === cells / 2) continue;
    const p = i * 2 / cells - 1;
    for (let j = 0; j < cells; j++) {
      const q = j * 2 / cells - 1;
      const r = (j + 1) * 2 / cells - 1;
      segment(project(p, q), project(p, r));
      segment(project(q, p), project(r, p));
    }
  }

  // Frame ticks, labelled every five frames
  const ticks = document.getElementById('ticks');
  for (let f = 0; f <= 100; f++) {
    const tick = document.createElement('span');
    if (f === 0) tick.className = 'now';
    if (f && f % 5 === 0) {
      tick.className = 'major';
      const label = document.createElement('b');
      label.textContent = f;
      tick.appendChild(label);
    }
    ticks.appendChild(tick);
  }
})();
```
